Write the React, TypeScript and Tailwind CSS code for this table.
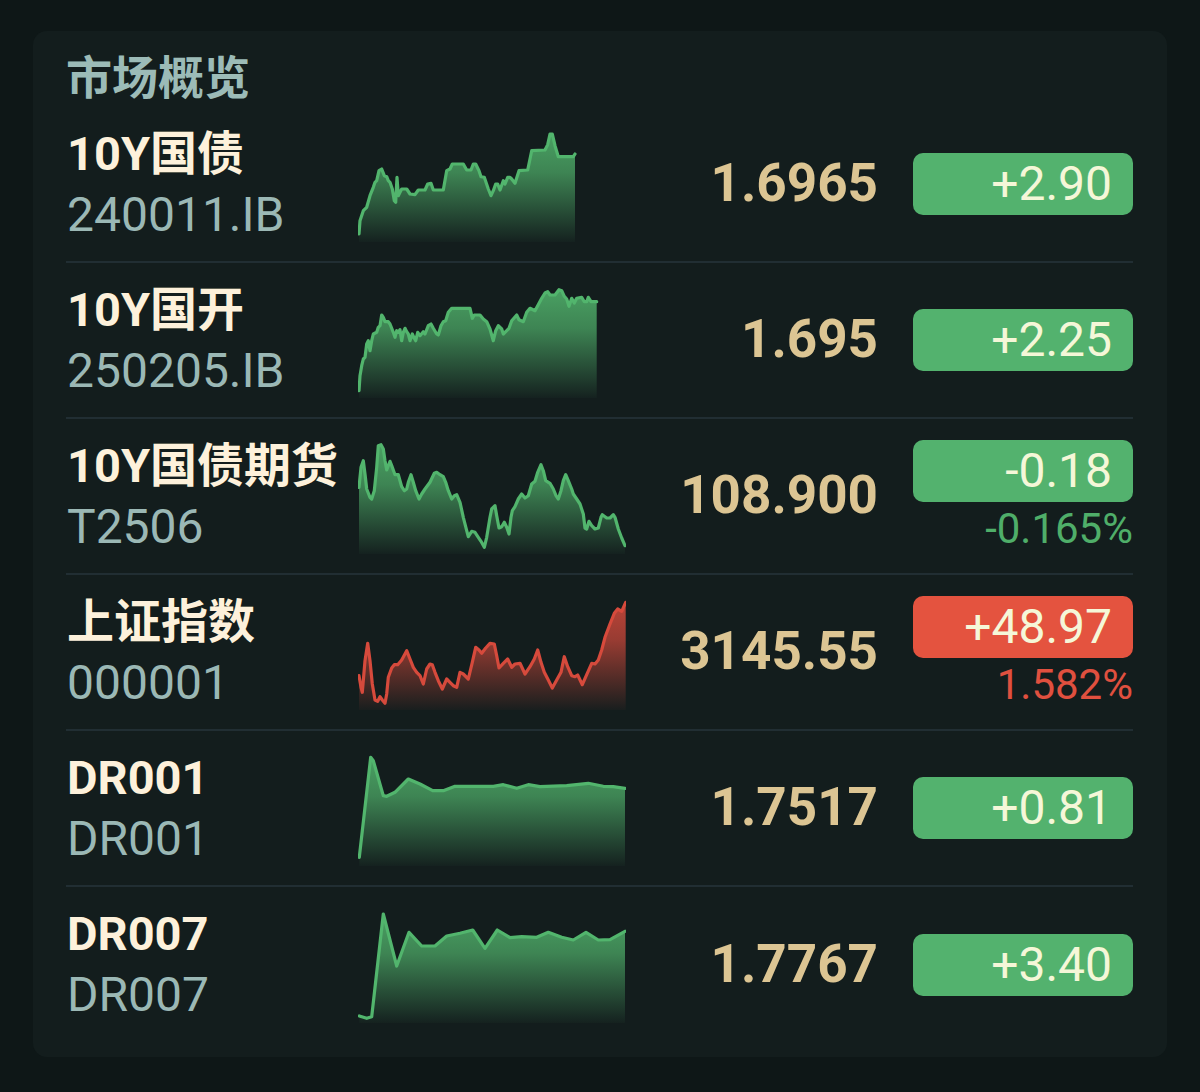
import React from 'react'

type Tone = 'green' | 'red'

interface Quote {
  name: string
  code: string
  price: string
  change: string
  pct?: string
  tone: Tone
  line: string
}

// chart points are in the 268x116 box of the sparkline
const QUOTES: Quote[] = [
  {
    name: '10Y国债',
    code: '240011.IB',
    price: '1.6965',
    change: '+2.90',
    tone: 'green',
    line: '1,108 2,94.7 5.3,84.7 8.7,81.3 12,69.7 15.3,61.3 17,56.3 18.7,54.7 21,44.7 23.7,43 26.3,49.7 28.7,50.7 30.3,54.7 32,56.3 34.3,63 36.3,74.7 37.7,76.3 39,51.3 40.3,69.7 42,66.3 43.7,63 48.7,63 52,68 57,68.7 60.3,64 67,64 69.7,58 73,57.3 75.3,64 85.3,64 88.7,44.7 92,43 94.3,38 105.3,38 108.7,44 113,44 115.3,38 117.7,38 121,44.7 123,50.7 126.3,51.3 130.3,63 133,69.7 135.3,64.7 137.7,58 139.7,58 142,64 145.3,54.7 147,58 149.7,51.3 152,51.3 153.7,53 157,57.3 161,44.7 169.7,44 173.7,24.7 187,24 189.7,18.7 192,8 194.3,8 197,19.7 200.3,30.7 215.3,30.7 217,28',
  },
  {
    name: '10Y国开',
    code: '250205.IB',
    price: '1.695',
    change: '+2.25',
    tone: 'green',
    line: '1,108.7 2,93.7 3.7,83.7 5.3,77 7,75.3 8.7,62 10.3,58.7 12,68.7 13.7,58.7 15.3,52 18.7,50.3 20.3,45.3 22,43.7 23.7,33 25.3,35.3 27,39.7 30.3,39.7 32,42 35.3,50.3 37,55.3 38.7,48.7 40.3,50.3 42,47.7 43.7,58.7 45.3,50.3 47,46.3 48.7,49.7 50.3,52 52,58.7 54.3,52 56.3,56.3 57.7,58.7 59.7,50.3 62,53.7 65.3,49.7 67,52 70.3,43.7 73,42 75.3,46.3 78.7,52 80.3,53 83,43.7 85.3,39.7 87.7,38.7 90.3,30.3 93.7,26.3 112,26.3 114.3,36.3 116.3,33 122,33 125.3,37 128.7,39.7 132,47 135.3,58.7 137.7,48.7 140.3,43.7 143.7,47 145.3,52 148.7,48.7 151,46.3 153.7,38.7 158.7,33 161,37.7 165.3,39.7 168.7,30.3 172,26.3 177,28.7 179.7,23.7 183.7,16.3 187,11 189.7,9.7 192,13 197,13 201,7.7 203.7,8.7 206.3,14.3 208.7,17 211,24.3 213.7,16.3 216.3,21 218.7,16.3 223.7,15.3 226.3,19.7 228.7,19.7 230.3,15.3 233,19.7 238.7,19.7',
  },
  {
    name: '10Y国债期货',
    code: 'T2506',
    price: '108.900',
    change: '-0.18',
    pct: '-0.165%',
    tone: 'green',
    line: '1,49.3 3,29.3 5.3,22.7 7,36 8.7,51 12,59.3 13.7,61 16.3,52.7 18.7,29.3 20.3,7.7 23,6.7 25.3,11 27,22.7 28.7,32 30.3,27.7 32,23.3 33.7,27.7 37,36.7 40.3,36.7 43.7,48.7 46.3,52.7 48.7,51 50.3,44.3 53,36.7 55.3,44.3 57.7,52.7 61,61 63.7,56 67,51 72,44.3 76.3,35.3 78.7,34.3 82,36.7 85.3,38.7 87.7,44.3 90.3,52.7 93.7,61 96.3,57.7 98.7,56.7 102,64.3 105.3,79.3 108.7,92.7 110.3,98.7 113.7,93.3 117,94.3 120.3,99.3 123,103.3 126.3,109.3 128.7,99.3 132,79.3 133.7,71 137,67.7 138.7,77.7 141,90 143.7,88.7 146.3,84.3 148.7,89.3 151,96 153,79.3 154.3,72.7 157,68.7 160.3,61 163.7,56 167,60 170.3,57.7 173.7,46 177,43.3 179.7,34.3 183,26.7 185.3,32.7 187.7,42.7 192,45.3 195.3,51 198,57.7 200.3,61 203,52.7 205.3,42.7 207.7,36.7 210.3,42.7 213.7,51 215.3,56 218.7,61 222,66 225.3,76 227,90 228.7,91 231,83.3 233.7,87.7 237,91 240.3,90 243,79.3 244.3,76.7 248.7,80 252,80 255.3,76.7 257,79.3 260.3,91 263.7,100 267,107.7',
  },
  {
    name: '上证指数',
    code: '000001',
    price: '3145.55',
    change: '+48.97',
    pct: '1.582%',
    tone: 'red',
    line: '1,81.7 3,93.3 4.3,98.3 7,66.7 9.7,49.3 12,66.7 14.3,90 17,106 19.7,107.3 22,102.7 24.3,106 27,109.3 28.7,100 30.3,83.3 33.7,74 36.3,70.7 39.7,70.7 43.7,66 48.7,56.7 52,65 55.3,73.3 58.7,78.3 62,81.7 65.3,90 68.7,75 72,70 74.3,70.7 77,78.3 80.3,86.7 84.3,95 88.7,85 92,88.3 95.3,91.7 98.7,93.3 102,78.3 105.3,80 110.3,85 114.3,68.3 117.7,53.3 121,56 123.7,59.3 127.7,54 132,49.3 136.3,50 138.7,61.7 141,74 145.3,69.3 149.7,65 153.7,73.3 157,70 162,69.3 167,80 172,72.7 176.3,65 179.7,56 183,68.3 186.3,78.3 190.3,86 194.3,94 198.7,86 203,78.3 206.3,62.7 209.7,72.7 213.7,81.7 217,82.7 219.7,81 224.3,90.7 228.7,80.7 233.7,69.3 237,70 240.3,66 243.7,56 247,43.3 252,30 256.3,19.3 259.7,15 263.7,17.3 267.7,8.3',
  },
  {
    name: 'DR001',
    code: 'DR001',
    price: '1.7517',
    change: '+0.81',
    tone: 'green',
    line: '1.3,107.3 12.7,7.3 15.3,10.7 25.3,45.7 28.7,46.3 37,42.3 50.3,29 62,34 74.7,40.7 85.3,40.7 97,36.3 135.3,36.3 145.3,34.7 158.7,38.3 170.3,34.7 182,36.7 208.7,35.7 230.3,33.3 245.3,36.3 255.3,36.7 267,38.3',
  },
  {
    name: 'DR007',
    code: 'DR007',
    price: '1.7767',
    change: '+3.40',
    tone: 'green',
    line: '1.3,109 8.7,111.3 13.7,109.7 25.3,7 38.7,59 51,25.3 63.7,39 77,39 88.7,29 102,26.3 114.7,23 127,41.3 139.3,23 152,30.7 163.7,29.7 178.7,30.3 190.3,25.3 203.7,30.3 215.3,33 228,25.3 240.3,33 252,32.7 267,24.3',
  },
]

const TONE = {
  green: { line: '#52b56d', badge: 'bg-[#53b26e]', pct: 'text-[#4fae69]' },
  red: { line: '#d64a3c', badge: 'bg-[#e4533f]', pct: 'text-[#e0503f]' },
}

function Sparkline({ line, tone, id }: { line: string; tone: Tone; id: string }) {
  const pts = line.split(' ').map((p) => p.split(',').map(Number))
  const d = pts.map(([x, y], i) => `${i ? 'L' : 'M'}${x} ${y}`).join(' ')
  const first = pts[0]
  const last = pts[pts.length - 1]
  const area = `${d} L${last[0]} 116 L${first[0]} 116 Z`
  const c = TONE[tone].line

  return (
    <svg width={268} height={116} viewBox="0 0 268 116" className="shrink-0">
      <defs>
        <linearGradient id={id} x1="0" y1="0" x2="0" y2="116" gradientUnits="userSpaceOnUse">
          <stop offset="0" stopColor={c} stopOpacity={0.9} />
          <stop offset="0.4" stopColor={c} stopOpacity={0.68} />
          <stop offset="1" stopColor={c} stopOpacity={0.03} />
        </linearGradient>
      </defs>
      <path d={area} fill={`url(#${id})`} />
      <path d={d} fill="none" stroke={c} strokeWidth={3.2} strokeLinejoin="round" strokeLinecap="round" />
    </svg>
  )
}

function QuoteRow({ q, i, last }: { q: Quote; i: number; last: boolean }) {
  const tone = TONE[q.tone]
  return (
    <div className={`flex items-center ${last ? 'h-[155px]' : 'h-[156px] border-b-2 border-[#212e33]'}`}>
      <div className="w-[292px] shrink-0 pl-[1px]">
        <div className="text-[47px] leading-[58px] font-bold text-[#fdf1db] whitespace-nowrap">{q.name}</div>
        <div className="mt-[3px] text-[48px] leading-[58px] text-[#9bb8b5]">{q.code}</div>
      </div>
      <Sparkline line={q.line} tone={q.tone} id={`spark-${i}`} />
      <div className="flex-1 text-right text-[53px] font-bold text-[#dcc593] pr-[35px]">{q.price}</div>
      <div className="w-[220px] shrink-0 flex flex-col items-end">
        <div
          className={`w-[220px] h-[62px] rounded-[10px] ${tone.badge} flex items-center justify-end pr-[21px] text-[48px] leading-none text-[#f5f7d8]`}
        >
          {q.change}
        </div>
        {q.pct && <div className={`mt-[4px] text-[42px] leading-[46px] ${tone.pct}`}>{q.pct}</div>}
      </div>
    </div>
  )
}

export default function App() {
  return (
    <div className="min-h-screen bg-[#0e1717] pt-[31px] pl-[33px] font-['Roboto','Noto_Sans_CJK_SC',sans-serif]">
      <div className="w-[1134px] h-[1026px] rounded-[14px] bg-[#131d1d] pt-[18px] pl-[33px] pr-[34px]">
        <div className="h-[58px] flex items-center text-[46px] font-bold text-[#9cbbb7]">市场概览</div>
        {QUOTES.map((q, i) => (
          <QuoteRow key={q.code + i} q={q} i={i} last={i === QUOTES.length - 1} />
        ))}
      </div>
    </div>
  )
}
